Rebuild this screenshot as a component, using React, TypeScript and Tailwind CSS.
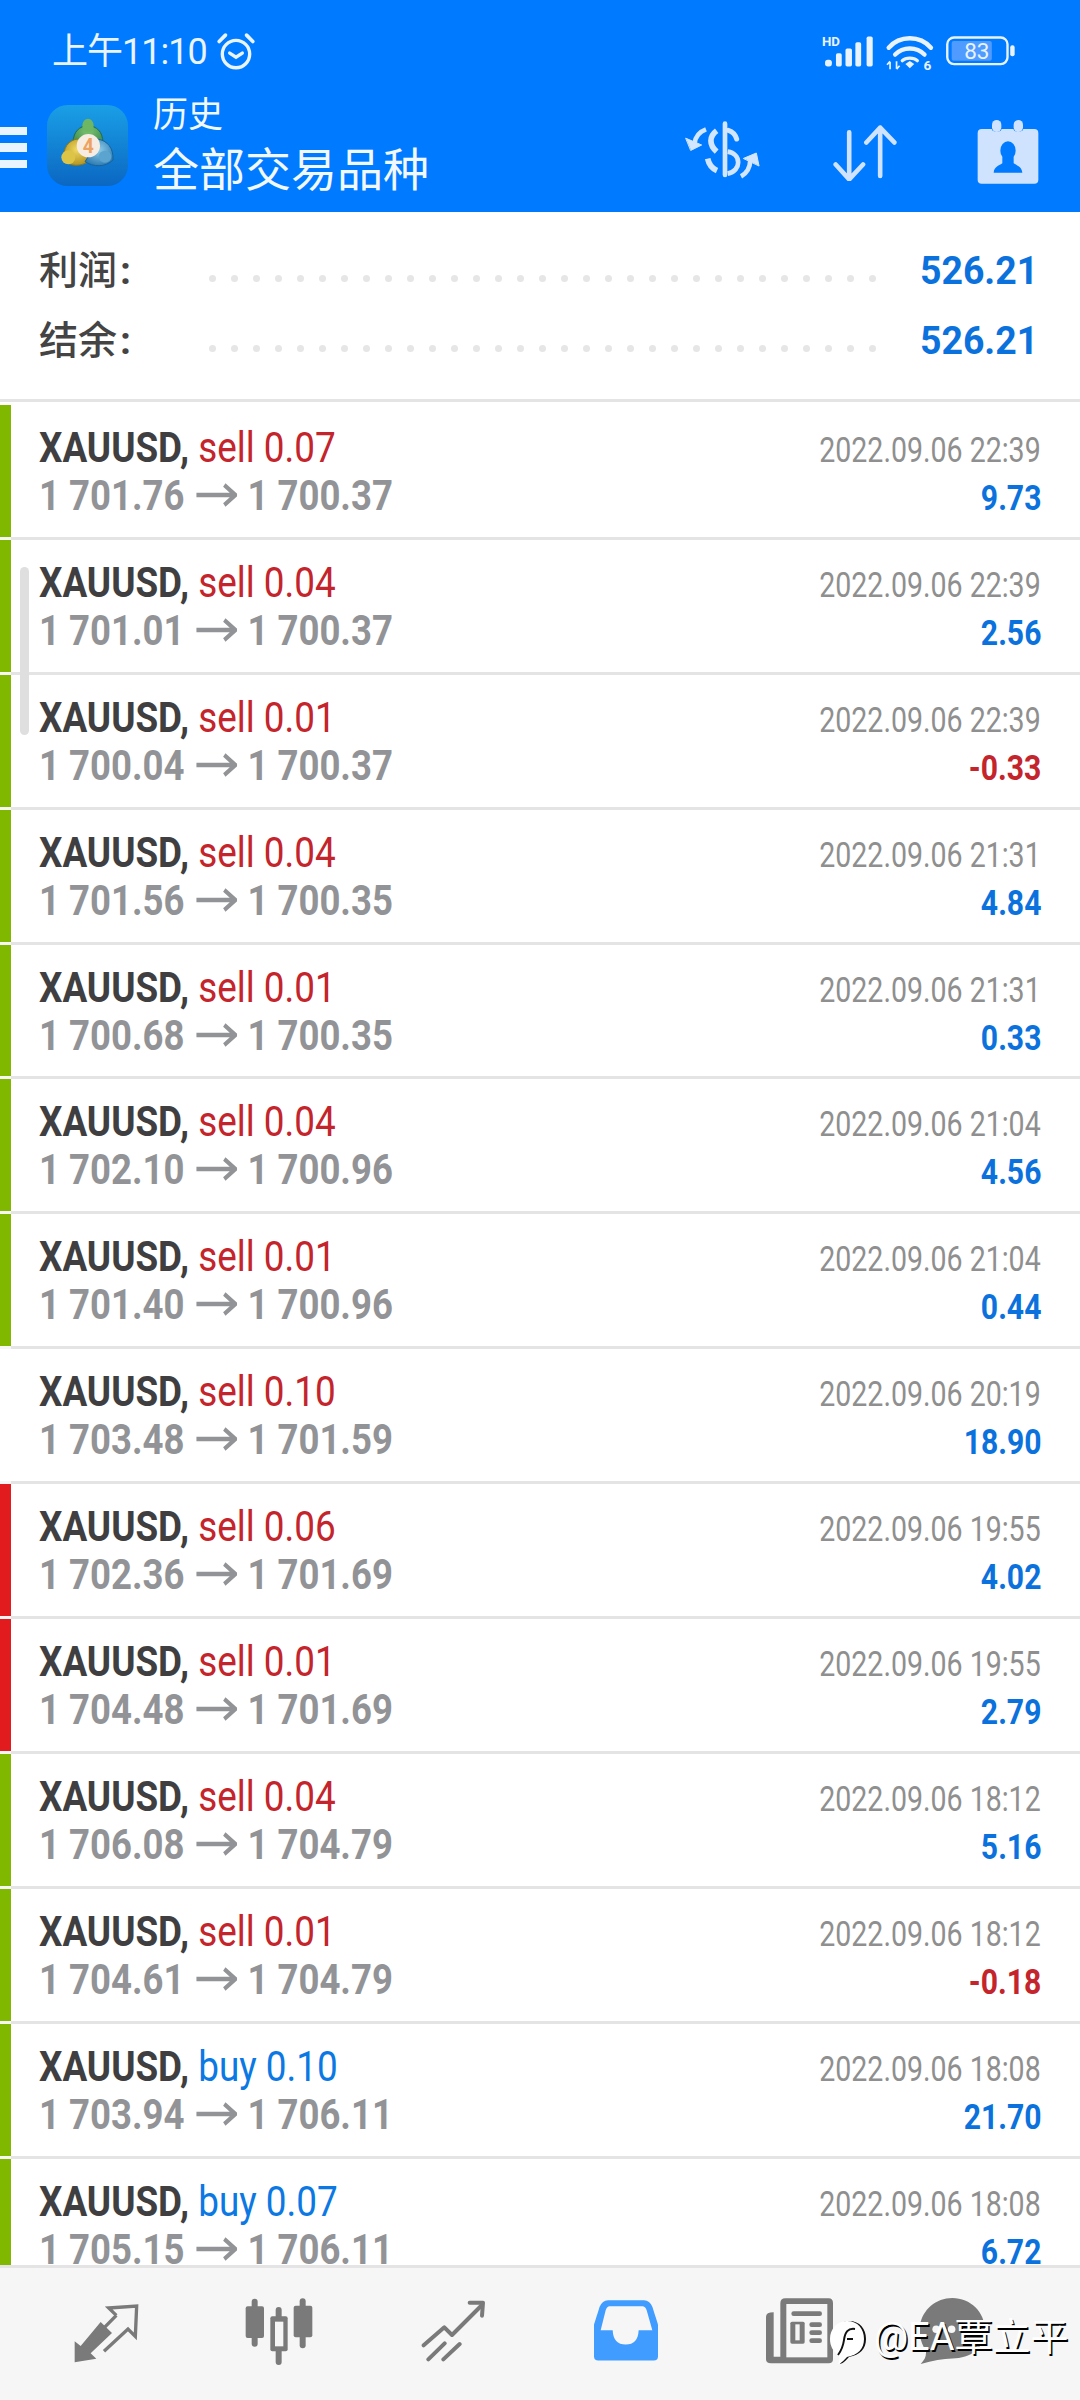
import React from "react";

type Trade = { side: "sell" | "buy"; lot: string; open: string; close: string; time: string; profit: string; bar: "green" | "red" | "none" };

const trades: Trade[] = [
  { side: "sell", lot: "0.07", open: "1 701.76", close: "1 700.37", time: "22:39", profit: "9.73", bar: "green" },
  { side: "sell", lot: "0.04", open: "1 701.01", close: "1 700.37", time: "22:39", profit: "2.56", bar: "green" },
  { side: "sell", lot: "0.01", open: "1 700.04", close: "1 700.37", time: "22:39", profit: "-0.33", bar: "green" },
  { side: "sell", lot: "0.04", open: "1 701.56", close: "1 700.35", time: "21:31", profit: "4.84", bar: "green" },
  { side: "sell", lot: "0.01", open: "1 700.68", close: "1 700.35", time: "21:31", profit: "0.33", bar: "green" },
  { side: "sell", lot: "0.04", open: "1 702.10", close: "1 700.96", time: "21:04", profit: "4.56", bar: "green" },
  { side: "sell", lot: "0.01", open: "1 701.40", close: "1 700.96", time: "21:04", profit: "0.44", bar: "green" },
  { side: "sell", lot: "0.10", open: "1 703.48", close: "1 701.59", time: "20:19", profit: "18.90", bar: "none" },
  { side: "sell", lot: "0.06", open: "1 702.36", close: "1 701.69", time: "19:55", profit: "4.02", bar: "red" },
  { side: "sell", lot: "0.01", open: "1 704.48", close: "1 701.69", time: "19:55", profit: "2.79", bar: "red" },
  { side: "sell", lot: "0.04", open: "1 706.08", close: "1 704.79", time: "18:12", profit: "5.16", bar: "green" },
  { side: "sell", lot: "0.01", open: "1 704.61", close: "1 704.79", time: "18:12", profit: "-0.18", bar: "green" },
  { side: "buy", lot: "0.10", open: "1 703.94", close: "1 706.11", time: "18:08", profit: "21.70", bar: "green" },
  { side: "buy", lot: "0.07", open: "1 705.15", close: "1 706.11", time: "18:08", profit: "6.72", bar: "green" },
];

function Row({ t }: { t: Trade }) {
  const barClass = t.bar === "green" ? "bg-[#80b800]" : t.bar === "red" ? "bg-[#e21b1f]" : "bg-white";
  return (
    <div className="flex h-[134.9px] shrink-0">
      <div className="flex w-[11px] shrink-0 flex-col">
        <div className={`flex-1 ${barClass}`} />
        <div className="h-[3px] bg-[#f6f6f6]" />
      </div>
      <div className="flex min-w-0 flex-1 flex-col border-b-[3px] border-[#e4e4e4] pt-[18px] pl-[28px] pr-[39px]">
        <div className="flex h-[48px] items-baseline justify-between leading-[48px]">
          <span className="inline-block origin-left scale-x-[0.857] whitespace-nowrap text-[43px]">
            <span className="font-bold text-[#3f3f41]">XAUUSD,</span>{" "}
            <span className={t.side === "sell" ? "text-[#c4242b]" : "text-[#0b78e3]"}>{t.side} {t.lot}</span>
          </span>
          <span className="inline-block origin-right scale-x-[0.815] whitespace-nowrap text-[35px] text-[#8f8f8f]">2022.09.06 {t.time}</span>
        </div>
        <div className="flex h-[48px] items-baseline justify-between leading-[48px]">
          <span className="inline-flex origin-left scale-x-[0.85] items-baseline whitespace-nowrap text-[43px] font-bold text-[#929396]">
            <span>{t.open}</span>
            <svg className="ml-[14px] mr-[12px] h-[24px] w-[48px] self-center" viewBox="0 0 48 24" fill="none" stroke="#929396" strokeWidth="4.5">
              <path d="M0 12H46M33 2L46 12L33 22" />
            </svg>
            <span>{t.close}</span>
          </span>
          <span className={`inline-block origin-right scale-x-[0.86] text-[35px] font-bold ${t.profit.startsWith("-") ? "text-[#c4242b]" : "text-[#0b72dd]"}`}>{t.profit}</span>
        </div>
      </div>
    </div>
  );
}

function SummaryLine({ label }: { label: string }) {
  return (
    <div className="flex h-[70px] items-center pl-[39px] pr-[42px]">
      <span className="flex w-[170px] shrink-0 text-[39px] font-medium text-[#444444]">
        <span>{label}</span>
        <span className="ml-[3px] font-bold">:</span>
      </span>
      <div className="mt-[14px] flex w-[667px] shrink-0 justify-between">
        {Array.from({ length: 31 }).map((_, i) => (
          <span key={i} className="h-[7px] w-[7px] rounded-full bg-[#e6e6e6]" />
        ))}
      </div>
      <span className="ml-auto inline-block origin-right scale-x-[0.96] text-[39px] font-bold text-[#0b72dd]">526.21</span>
    </div>
  );
}

function AppIcon() {
  return (
    <svg className="h-[81px] w-[81px] shrink-0" viewBox="0 0 243 243">
      <defs>
        <linearGradient id="ic" x1="0" y1="0" x2="0" y2="1">
          <stop offset="0" stopColor="#1a9fe6" />
          <stop offset="1" stopColor="#0b67c2" />
        </linearGradient>
        <radialGradient id="gr" cx="0.5" cy="0.25" r="0.75">
          <stop offset="0" stopColor="#7cc573" />
          <stop offset="1" stopColor="#2f7f47" />
        </radialGradient>
        <radialGradient id="ye" cx="0.5" cy="0.4" r="0.7">
          <stop offset="0" stopColor="#f0d860" />
          <stop offset="1" stopColor="#a98a18" />
        </radialGradient>
        <radialGradient id="bl" cx="0.5" cy="0.4" r="0.7">
          <stop offset="0" stopColor="#8fcbe8" />
          <stop offset="1" stopColor="#1f70ab" />
        </radialGradient>
      </defs>
      <rect width="243" height="243" rx="62" fill="url(#ic)" />
      <path d="M78 112C80 78 96 66 123 60C150 66 166 78 168 112L123 135Z" fill="url(#gr)" stroke="#1d6a52" strokeWidth="3" />
      <ellipse cx="123" cy="62" rx="17" ry="21" fill="#6db664" />
      <path d="M92 102C62 106 48 130 50 165C70 186 102 185 128 168L108 125Z" fill="url(#ye)" stroke="#8d7a1c" strokeWidth="3" />
      <ellipse cx="64" cy="157" rx="21" ry="21" fill="#dcc446" />
      <path d="M150 102C182 106 200 130 198 165C175 188 138 186 114 170L140 130Z" fill="url(#bl)" stroke="#17639c" strokeWidth="3" />
      <ellipse cx="174" cy="155" rx="19" ry="18" fill="#5ba4cf" />
      <circle cx="124" cy="122" r="35" fill="#f6ece2" />
      <text x="124" y="143" textAnchor="middle" fontSize="58" fontWeight="700" fill="#eda35f">4</text>
    </svg>
  );
}

function StatusIcons() {
  const c = "#e8f3ff";
  return (
    <svg className="h-[37px] w-[193px]" viewBox="0 0 567 108" fill="none">
      <text x="0" y="34" fontSize="39" fontWeight="700" fill={c}>HD</text>
      <rect x="9" y="75" width="20" height="20" rx="8" fill={c} />
      <rect x="41" y="56" width="17" height="39" rx="5" fill={c} />
      <rect x="69" y="42" width="19" height="53" rx="5" fill={c} />
      <rect x="98" y="24" width="17" height="71" rx="5" fill={c} />
      <rect x="131" y="7" width="18" height="88" rx="5" fill={c} />
      <g stroke={c} strokeWidth="13" strokeLinecap="round">
        <path d="M196 40C228 3 288 3 320 40" />
        <path d="M215 60C238 36 278 36 301 60" />
      </g>
      <path d="M236 78C246 68 270 68 280 78" stroke={c} strokeWidth="10" strokeLinecap="round" />
      <path d="M245 88L258 79L271 88L258 100Z" fill={c} />
      <path d="M200 82V103M191 90L200 80M219 80V102M228 93L219 103" stroke={c} strokeWidth="5" />
      <text x="298" y="104" fontSize="40" fontWeight="700" fill={c}>6</text>
      <rect x="368" y="10" width="177" height="78" rx="20" stroke={c} strokeWidth="7" />
      <rect x="381" y="20" width="118" height="58" rx="6" fill="#4f9bff" />
      <text x="455" y="74" textAnchor="middle" fontSize="66" fill={c}>83</text>
      <rect x="553" y="33" width="13" height="32" rx="6" fill={c} />
    </svg>
  );
}

function DollarIcon() {
  const c = "#d3e6ff";
  return (
    <svg className="h-[75px] w-[90px]" viewBox="0 0 270 225" fill="none" stroke={c} strokeLinecap="round">
      <path d="M132 26V180" strokeWidth="14" />
      <path d="M107 47C84 64 84 90 107 110" strokeWidth="17" strokeLinecap="butt" />
      <path d="M142 46C155 50 163 58 167 72" strokeWidth="15" />
      <path d="M80 131C84 150 92 160 108 167" strokeWidth="17" strokeLinecap="butt" />
      <path d="M140 110C182 116 182 168 140 176" strokeWidth="14" strokeLinecap="butt" />
      <path d="M75 43C56 50 43 65 41 85" strokeWidth="14" strokeLinecap="butt" />
      <path d="M15 70L62 90L30 106Z" fill={c} stroke={c} strokeWidth="3" strokeLinejoin="round" />
      <path d="M180 184C197 175 207 156 208 136" strokeWidth="14" strokeLinecap="butt" />
      <path d="M188 130L226 114L234 152Z" fill={c} stroke={c} strokeWidth="3" strokeLinejoin="round" />
    </svg>
  );
}

function SortIcon() {
  return (
    <svg className="h-[56px] w-[68px]" viewBox="845 350 204 170" fill="none" stroke="#cfe3ff" strokeWidth="14" strokeLinecap="round" strokeLinejoin="round">
      <path d="M896 372V510M855 470L896 515L938 470" />
      <path d="M990 505V358M948 403L990 358L1033 403" />
    </svg>
  );
}

function CalendarIcon() {
  return (
    <svg className="h-[65px] w-[62px]" viewBox="1266 340 186 195">
      <rect x="1268" y="367" width="182" height="164" rx="12" fill="#cfe3ff" />
      <circle cx="1325" cy="358" r="18" fill="#007aff" />
      <circle cx="1390" cy="358" r="18" fill="#007aff" />
      <rect x="1311" y="340" width="28" height="36" rx="14" fill="#cfe3ff" />
      <rect x="1376" y="340" width="28" height="36" rx="14" fill="#cfe3ff" />
      <ellipse cx="1359" cy="432" rx="23" ry="28" fill="#007aff" />
      <path d="M1342 452V470C1330 478 1318 480 1316 498H1402C1400 480 1388 478 1376 470V452Z" fill="#007aff" />
    </svg>
  );
}

const navGray = "#7a7a7a";

function NavIcons() {
  return (
    <>
      <svg className="mt-[35px] h-[60px] w-[66px] shrink-0" viewBox="215 305 198 180" fill="none">
        <path d="M220 483V420L238 434L298 362L332 395L268 456L285 472Z" fill={navGray} />
        <path d="M345 342L322 320L406 314L402 405L380 383L308 450M345 342L300 388" stroke={navGray} strokeWidth="10" />
      </svg>
      <svg className="ml-[106px] mt-[30px] h-[68px] w-[68px] shrink-0" viewBox="714 295 204 204" fill="none">
        <rect x="716" y="320" width="55" height="95" rx="6" fill={navGray} />
        <rect x="734" y="297" width="18" height="144" rx="9" fill={navGray} />
        <rect x="806" y="322" width="18" height="174" rx="9" fill={navGray} />
        <rect x="790" y="350" width="52" height="105" rx="6" fill={navGray} />
        <rect x="804" y="366" width="25" height="74" fill="#f6f6f6" />
        <rect x="860" y="318" width="56" height="95" rx="6" fill={navGray} />
        <rect x="878" y="296" width="18" height="150" rx="9" fill={navGray} />
      </svg>
      <svg className="ml-[108px] mt-[32px] h-[62px] w-[64px] shrink-0" viewBox="1222 300 192 186" fill="none" stroke={navGray} strokeWidth="12" strokeLinecap="round" strokeLinejoin="round">
        <path d="M1230 436L1292 382L1315 405L1405 315" />
        <path d="M1368 308H1408L1405 347" />
        <path d="M1244 478L1293 430M1289 478L1338 432" />
      </svg>
      <svg className="ml-[109px] mt-[32px] h-[61px] w-[64px] shrink-0" viewBox="158 302 192 182">
        <path d="M200 302H308Q325 302 333 322L350 375V470Q350 483 337 483H171Q158 483 158 470V375L175 322Q183 302 200 302Z" fill="#409cff" />
        <path d="M205 320H303Q312 320 316 332L333 392H292Q290 435 253 435Q216 435 214 392H178L193 332Q197 320 205 320Z" fill="#f6f6f6" />
      </svg>
      <svg className="ml-[108px] mt-[30px] h-[66px] w-[67px] shrink-0" viewBox="657 294 201 198">
        <path d="M680 337V470H700V310Q700 295 715 295H845Q858 295 858 310V478Q858 490 845 490H672Q657 490 657 478V350Q657 337 680 337Z" fill={navGray} />
        <rect x="718" y="312" width="123" height="160" fill="#f6f6f6" />
        <rect x="733" y="334" width="92" height="14" rx="7" fill={navGray} />
        <rect x="730" y="365" width="43" height="66" rx="5" fill={navGray} />
        <rect x="745" y="373" width="13" height="48" fill="#f6f6f6" />
        <rect x="787" y="367" width="38" height="14" rx="7" fill={navGray} />
        <rect x="787" y="391" width="38" height="14" rx="7" fill={navGray} />
        <rect x="787" y="415" width="38" height="14" rx="7" fill={navGray} />
      </svg>
      <svg className="ml-[87px] mt-[30px] h-[66px] w-[66px] shrink-0" viewBox="1103 294 192 192">
        <path d="M1197 294C1250 294 1292 335 1292 388C1292 440 1250 470 1197 470C1170 470 1140 476 1105 486C1118 472 1122 462 1120 446C1108 430 1102 410 1102 388C1102 335 1145 294 1197 294Z" fill={navGray} />
        <circle cx="1150" cy="385" r="11" fill="#f6f6f6" />
        <circle cx="1195" cy="385" r="11" fill="#f6f6f6" />
      </svg>
    </>
  );
}

export default function App() {
  return (
    <div className="relative flex h-[2400px] w-[1080px] flex-col overflow-hidden bg-white [font-family:Roboto,'Noto_Sans_CJK_SC',sans-serif]">
      <header className="h-[212px] shrink-0 bg-[#007aff]">
        <div className="flex h-[92px] items-center pl-[52px] pr-[65px] pt-[12px] text-[#eaf4ff]">
          <span className="text-[36px] leading-none tracking-[-1px]">上午11:10</span>
          <svg className="ml-[9px] h-[40px] w-[40px]" viewBox="0 0 38 38" fill="none" stroke="#eaf4ff" strokeWidth="3.2" strokeLinecap="round">
            <circle cx="19" cy="21" r="13" />
            <path d="M13 20L19 24L25 20" />
            <path d="M3 9L9 3M35 9L29 3" strokeWidth="3.5" />
          </svg>
          <div className="ml-auto flex">
            <StatusIcons />
          </div>
        </div>
        <div className="flex h-[120px] items-start">
          <div className="mt-[35px] flex w-[27px] shrink-0 flex-col gap-[8px]">
            <span className="h-[8px] bg-[#eaf4ff]" />
            <span className="h-[9px] bg-[#eaf4ff]" />
            <span className="h-[8px] bg-[#eaf4ff]" />
          </div>
          <div className="ml-[20px] mt-[13px] flex">
            <AppIcon />
          </div>
          <div className="ml-[25px] flex flex-col text-[#f2f8ff]">
            <span className="mt-[3px] text-[35px] leading-[42px]">历史</span>
            <span className="mt-[6px] text-[46px] leading-[54px]">全部交易品种</span>
          </div>
          <div className="ml-auto mt-[23px] flex items-center pr-[41px]">
            <DollarIcon />
            <div className="ml-[61px] flex">
              <SortIcon />
            </div>
            <div className="ml-[77px] flex">
              <CalendarIcon />
            </div>
          </div>
        </div>
      </header>

      <section className="flex h-[190px] shrink-0 flex-col border-b-[3px] border-[#e4e4e4] pt-[24px]">
        <SummaryLine label="利润" />
        <SummaryLine label="结余" />
      </section>

      <main className="relative mt-[3px] flex min-h-0 flex-1 flex-col overflow-hidden">
        {trades.map((t, i) => (
          <Row key={i} t={t} />
        ))}
        <div className="absolute left-[20px] top-[162px] h-[168px] w-[9px] rounded-full bg-[#dfdfdf]" />
      </main>

      <nav className="flex h-[135px] shrink-0 items-start border-t-[3px] border-[#e4e4e4] bg-[#f6f6f6] pl-[73px]">
        <NavIcons />
      </nav>

      <div className="absolute left-[830px] top-[2317px] flex items-start gap-[8px] text-[38px] font-normal leading-[40px] text-white [text-shadow:1.5px_1.5px_0_#000]">
        <svg className="mt-[3px] h-[44px] w-[36px]" viewBox="0 0 36 44" fill="none">
          <path d="M19 1C30 1 36 9 36 19C36 29 30 35 19 37C16 40 14 43 10 44C12 40 12 37 10 35C4 32 1 26 1 19C1 9 9 1 19 1Z" fill="#111" />
          <path d="M17 1C28 1 34 9 34 19C34 29 28 35 17 37C14 40 12 43 8 44C10 40 10 37 8 35C3 31 0 26 0 19C0 9 7 1 17 1Z" fill="#fff" />
          <path d="M25 9C18 8 15 12 14 20C13 27 11 31 8 35M17 19H23" stroke="#111" strokeWidth="2" />
        </svg>
        <span>@EA覃立平</span>
      </div>
    </div>
  );
}
